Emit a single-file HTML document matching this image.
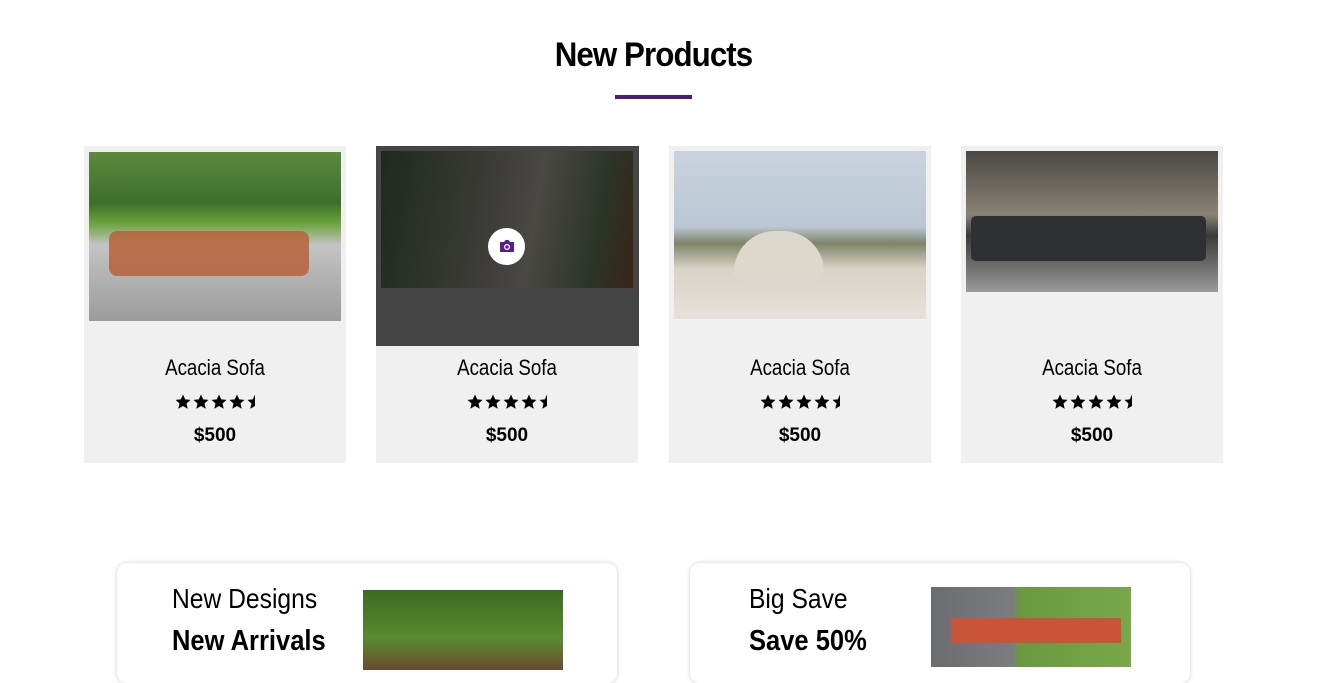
<!DOCTYPE html>
<html><head><style>
body{margin:0;width:1327px;height:655px;overflow:hidden;background:#fff;font-family:"Liberation Sans",sans-serif;position:relative}
.a{position:absolute}
h2{position:absolute;left:0;width:1307px;text-align:center;top:36px;margin:0;font-size:34px;font-weight:bold;letter-spacing:-1px;transform:scaleX(.92)}
.card{position:absolute;top:146px;width:262px;height:317px;background:#f0f0f0}
.img{position:absolute;left:5px;width:252px}
.t{position:absolute;width:100%;text-align:center;font-size:22px;transform:scaleX(.85);top:209px}
.s{position:absolute;top:248px;left:91px}
.p{position:absolute;top:279px;width:100%;text-align:center;font-size:19px;font-weight:bold}
.box{position:absolute;top:563px;width:500px;height:120px;background:#fff;border-radius:10px;box-shadow:0 0 5px rgba(0,0,0,.2)}
.l1{position:absolute;font-size:28px;transform:scaleX(.88);transform-origin:left}
.l2{position:absolute;font-size:29px;font-weight:bold;transform:scaleX(.88);transform-origin:left}
</style></head><body>
<svg width="0" height="0" style="position:absolute"><defs>
<path id="st" d="M8 0.5l2.2 4.9 5.3.5-4 3.6 1.2 5.2L8 12 3.3 14.7l1.2-5.2-4-3.6 5.3-.5z"/>
<g id="stars"><use href="#st"/><use href="#st" x="18"/><use href="#st" x="36"/><use href="#st" x="54"/><path d="M80 0.5v11.5l-4.7 2.7 1.2-5.2-4-3.6 5.3-.5z"/></g>
</defs></svg>
<h2>New Products</h2>
<div class="a" style="left:615px;top:95px;width:77px;height:4px;background:#4b1d78"></div>

<div class="card" style="left:84px">
<div class="img" style="top:6px;height:169px;background:linear-gradient(#5c8a3e 0,#3f6e2a 30%,#6aa33c 42%,#c4c4c4 55%,#9b9b9b 100%)"></div>
<div class="a" style="left:25px;top:85px;width:200px;height:45px;background:#b9623a;border-radius:8px;opacity:.85"></div>
<div class="t">Acacia Sofa</div><svg class="s" width="82" height="16"><use href="#stars"/></svg><div class="p">$500</div></div>

<div class="card" style="left:376px">
<div class="a" style="left:0;top:0;width:263px;height:200px;background:#454545"></div>
<div class="img" style="top:5px;height:137px;background:linear-gradient(100deg,#1f2a1c,#3a3a36 40%,#4a4844 60%,#2b3326 85%,#3a2418)"></div>
<div class="a" style="left:112px;top:82px;width:37px;height:37px;border-radius:50%;background:#fff"></div>
<svg class="a" style="left:123px;top:93px" width="16" height="14" viewBox="0 0 16 14"><path d="M1 3h4l1.5-2h3L11 3h4v10H1z" fill="#5a1f8e"/><circle cx="8" cy="8" r="3" fill="#fff"/><circle cx="8" cy="8" r="1.8" fill="#5a1f8e"/></svg>
<div class="t">Acacia Sofa</div><svg class="s" width="82" height="16"><use href="#stars"/></svg><div class="p">$500</div></div>

<div class="card" style="left:669px">
<div class="img" style="top:5px;height:168px;background:linear-gradient(#c9d3df 0,#bcc7d5 45%,#7d8468 55%,#d9d2c6 70%,#e6e1db 100%)"></div>
<div class="a" style="left:65px;top:85px;width:90px;height:50px;background:#ddd7cc;border-radius:45px 45px 10px 10px"></div>
<div class="t">Acacia Sofa</div><svg class="s" width="82" height="16"><use href="#stars"/></svg><div class="p">$500</div></div>

<div class="card" style="left:961px">
<div class="img" style="top:5px;height:141px;background:linear-gradient(#4a4743 0,#8a8276 45%,#3a3a3a 60%,#9a9a9a 100%)"></div>
<div class="a" style="left:10px;top:70px;width:235px;height:45px;background:#2f3033;border-radius:5px"></div>
<div class="t">Acacia Sofa</div><svg class="s" width="82" height="16"><use href="#stars"/></svg><div class="p">$500</div></div>

<div class="box" style="left:117px">
<div class="l1" style="left:55px;top:20px">New Designs</div>
<div class="l2" style="left:55px;top:62px">New Arrivals</div>
<div class="a" style="left:246px;top:27px;width:200px;height:80px;background:linear-gradient(#3c6a22,#5a8a30 60%,#6a4a30)"></div>
</div>
<div class="box" style="left:690px">
<div class="l1" style="left:59px;top:20px">Big Save</div>
<div class="l2" style="left:59px;top:62px">Save 50%</div>
<div class="a" style="left:241px;top:24px;width:200px;height:80px;background:linear-gradient(90deg,#6a6c70 0,#7a7c80 40%,#6a9a40 45%,#78a848);"></div>
<div class="a" style="left:261px;top:55px;width:170px;height:25px;background:#c8553a"></div>
</div>
</body></html>
